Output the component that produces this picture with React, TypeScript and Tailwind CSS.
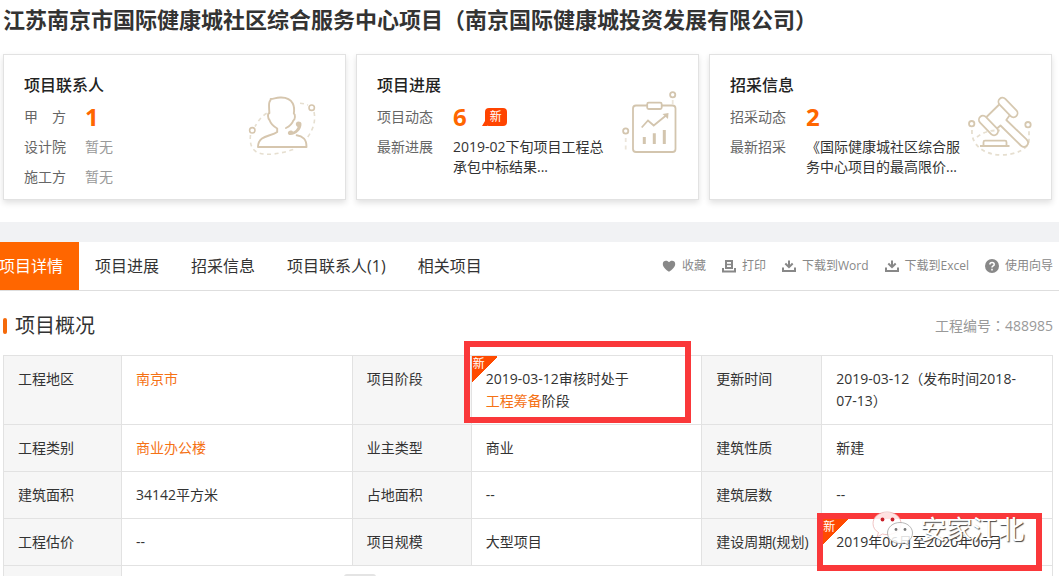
import React from 'react';

const tabs = ['项目详情', '项目进展', '招采信息', '项目联系人(1)', '相关项目'];

const ContactIcon = () => (
  <svg viewBox="0 0 72 66" className="w-[72px] h-[66px] shrink-0" fill="none" stroke="#d6c6ae" strokeWidth="1.6" aria-hidden="true">
    <path strokeWidth="1.9" strokeLinejoin="round" strokeLinecap="round" d="M39 35c4-2 6.500-5 7.300-7.500 2-1 2.200-6 .5-7 .8-5 0-8-1-10C43 5 37 4.300 33 4.500c-4 .2-6 1.200-9.300 1.500.3 1.500-1.200 1.500-1.500 4-.4 3 0 7 .2 10-2 .500-1.700 5 .1 7 1.200 3.500 4 6.500 7.700 8.500v3.500C26 42 19 42.500 15 45.500c-3 2.300-4 5-4 8.500h48.500c0-3-.3-6-2.500-8.300-2-2-4.500-3-7.300-3.400" />
    <path fill="#d6c6ae" stroke="none" d="M49.500 29.200c1.600-1.500 4.800-.6 5 1.500.2 6-5.500 11.500-11.500 11.300-2.400-.2-2.600-2.600-1.300-3.800 1.300-.9 3.400-.9 4.300.5 2.200-1 3.700-2.500 4.700-4.800-1.900-.8-2.500-3.200-1.200-4.700z" />
    <circle cx="5.300" cy="37.300" r="2.700" />
    <circle cx="64.700" cy="14.700" r="2.700" />
    <path stroke="#e6dfd0" strokeDasharray="4 3.500" d="M19.700 20.300C15 23 11 28 8 33.500M3.500 42c-1 8 1 14 6 17 10 5 27 1 40-3.500M53 10.300c3 0 5 .5 8 1.700M67 19c2 9-1 19-8 27" />
  </svg>
);

const ProgressIcon = () => (
  <svg viewBox="0 0 62 68" className="w-[62px] h-[68px] shrink-0" fill="none" stroke="#d3c5ae" strokeWidth="1.800" aria-hidden="true">
    <path d="M27 16.500H16a3 3 0 0 0-3 3v40.500a3 3 0 0 0 3 3h36.500a3 3 0 0 0 3-3V19.500a3 3 0 0 0-3-3H42" />
    <rect x="27.200" y="13.700" width="14.500" height="6.300" rx="1.500" />
    <path d="m21.700 38.500 6.300-7 5.700 5L46 26.500" />
    <path fill="#d3c5ae" stroke="none" d="m42.500 25 6-1-.5 6z" />
    <path strokeWidth="3" d="M24.300 55v-7M34.300 55V44.300M44.300 55V41" />
    <circle cx="5.700" cy="42" r="2.600" />
    <circle cx="52.700" cy="5.700" r="2.600" />
    <path stroke="#ebe5da" strokeDasharray="4 3.500" d="M5.700 49v12M52.700 11v4" />
  </svg>
);

const GavelIcon = () => (
  <svg viewBox="0 0 70 66" className="w-[70px] h-[66px] shrink-0" fill="none" stroke="#d6c8b0" strokeWidth="1.800" aria-hidden="true">
    <path stroke="#e6dfd0" strokeDasharray="4 3.500" d="M7 37c-1 13 9 24 28 25 16 0 29-6 29-15V37M12 44c6-5 14-7 23-6.500" />
    <rect x="-12" y="-4" width="24" height="8" rx="4" transform="translate(43 14.500) rotate(46)" />
    <rect x="-12" y="-4" width="24" height="8" rx="4" transform="translate(23.500 32.500) rotate(46)" />
    <path d="M34.200 11.500 21.500 24M44.500 22.500 41.300 27l20.200 19.300c4.200 4.500-1.300 10-5.700 6.200L35.500 32.500l-3.500 3" strokeLinejoin="round" />
    <path d="M18.500 52.500v-3.300a1.500 1.500 0 0 1 1.500-1.500h20a1.500 1.500 0 0 1 1.500 1.500v3.300M15 53h29.500" />
    <circle cx="6.700" cy="30.700" r="2.700" />
    <circle cx="63" cy="31.700" r="2.700" />
  </svg>
);

const HeartIcon = () => (
  <svg viewBox="0 0 14 14" className="w-3.5 h-3.5" fill="#888" aria-hidden="true">
    <path d="M7 12.800C4 10.500.8 8 .8 4.900.8 2.900 2.200 1.700 3.900 1.700 5.300 1.700 6.400 2.400 7 3.300c.6-.9 1.700-1.600 3.100-1.600 1.700 0 3.100 1.200 3.100 3.200C13.200 8 10 10.500 7 12.800z" />
  </svg>
);

const PrintIcon = () => (
  <svg viewBox="0 0 14 14" className="w-3.5 h-3.5" fill="none" stroke="#888" strokeWidth="2" aria-hidden="true">
    <path d="M4 2h6v7H4zM1 9v3.500h12V9" />
    <path strokeWidth="1.500" d="M5 5.500h4" />
  </svg>
);

const DownloadIcon = () => (
  <svg viewBox="0 0 14 14" className="w-3.5 h-3.5" fill="none" stroke="#888" strokeWidth="2" aria-hidden="true">
    <path d="M1 8.500V12h12V8.500M7 1.500v6.500M3.300 4.500 7 8.200l3.700-3.700" />
  </svg>
);

const HelpIcon = () => (
  <svg viewBox="0 0 14 14" className="w-3.5 h-3.5" fill="none" aria-hidden="true">
    <circle cx="7" cy="7" r="7" fill="#888" />
    <path d="M4.900 5.500c0-2.700 4.300-2.600 4.300-.1C9.200 7 7 6.900 7 8.600M7 9.800v1.600" stroke="#fff" strokeWidth="1.500" />
  </svg>
);

const WechatIcon = () => (
  <svg viewBox="0 0 44 36" className="w-11 h-9" fill="#fff" fillOpacity=".85" stroke="#999" strokeWidth=".7" aria-hidden="true">
    <path stroke="#e9a9a9" d="M15 1C7 1 1 6 1 12.500c0 4 2.200 7 5.500 9L5 26l5.500-3c1.500.5 3 .6 5 .6C23 23.500 29 19 29 12.500S23 1 15 1z" />
    <path d="M28 11.500c-7 0-12.500 4.700-12.500 10.500S21 32.500 28 32.500c1.600 0 3-.2 4.300-.6l4.700 2.600-1.200-4c3-2 4.700-5 4.700-8.500 0-5.800-5.500-10.500-12.500-10.500z" />
    <g stroke="none" fillOpacity="1">
      <circle cx="10.500" cy="8.500" r="1.900" fill="#c81e28" />
      <circle cx="20.500" cy="8.500" r="1.900" fill="#c81e28" />
      <circle cx="24" cy="18.500" r="1.400" fill="#777" />
      <circle cx="33" cy="18.500" r="1.400" fill="#777" />
    </g>
  </svg>
);

const actions = [
  { label: '收藏', icon: <HeartIcon /> },
  { label: '打印', icon: <PrintIcon /> },
  { label: '下载到Word', icon: <DownloadIcon /> },
  { label: '下载到Excel', icon: <DownloadIcon /> },
  { label: '使用向导', icon: <HelpIcon /> },
];

const Card = ({ title, icon, children }: { title: string; icon: React.ReactNode; children: React.ReactNode }) => (
  <section className="flex-1 min-w-0 min-h-[146px] flex justify-between border border-[#e2e2e2] bg-white pl-5 pt-3.5 pr-4 shadow-[0_3px_6px_rgba(0,0,0,0.12)]">
    <div>
      <h2 className="text-base leading-8 font-medium text-[#222]">{title}</h2>
      {children}
    </div>
    {icon}
  </section>
);

const Count = ({ children }: { children: React.ReactNode }) => (
  <span className="block text-2xl leading-[30px] font-bold text-[#ff6600]">{children}</span>
);

const NewCorner = () => (
  <span className="absolute left-0 top-0 w-[26px] h-[26px] pl-px text-xs leading-4 text-white bg-[linear-gradient(135deg,#ff4a00_50%,transparent_50%)]">新</span>
);

const Th = ({ children }: { children?: React.ReactNode }) => (
  <th scope="row" className="border border-[#e2e2e2] bg-[#f6f6f6] pl-3.5 py-3 align-top text-left font-normal whitespace-nowrap">{children}</th>
);

const Td = ({ children }: { children?: React.ReactNode }) => (
  <td className="relative border border-[#e2e2e2] px-3.5 py-3 align-top">{children}</td>
);

export default function App() {
  return (
    <div className="bg-white text-sm text-[#333] font-['Open_Sans','Noto_Sans_CJK_SC',sans-serif] overflow-hidden" lang="zh-CN">
      <header className="pl-[3px] pr-[7px] pb-[22px]">
        <h1 className="text-[22px] leading-[38px] pb-4 font-bold whitespace-nowrap">
          江苏南京市国际健康城社区综合服务中心项目（南京国际健康城投资发展有限公司）
        </h1>
        <div className="flex gap-2.5">
          <Card title="项目联系人" icon={<div className="pt-6 pr-2.5"><ContactIcon /></div>}>
            <dl className="grid grid-cols-[61px_auto] pt-px leading-[30px] text-[#666]">
              <dt>甲　方</dt>
              <dd><Count>1</Count></dd>
              <dt>设计院</dt>
              <dd className="text-[#999]">暂无</dd>
              <dt>施工方</dt>
              <dd className="text-[#999]">暂无</dd>
            </dl>
          </Card>
          <Card title="项目进展" icon={<div className="pt-5"><ProgressIcon /></div>}>
            <dl className="grid grid-cols-[76px_156px] pt-px leading-[30px] text-[#666]">
              <dt>项目动态</dt>
              <dd className="flex items-center gap-[18px]">
                <Count>6</Count>
                <span className="relative w-[22px] h-[18px] rounded-sm bg-[#ff4400] text-center text-xs leading-[18px] text-white">
                  新
                  <svg viewBox="0 0 5 5" className="absolute -left-[3px] bottom-0 w-[5px] h-[5px]" fill="#ff4400" aria-hidden="true">
                    <path d="M3 0v5H0z M3 0h2v5H0z" />
                  </svg>
                </span>
              </dd>
              <dt>最新进展</dt>
              <dd className="pt-[5px] leading-5 text-[#333]">2019-02下旬项目工程总承包中标结果...</dd>
            </dl>
          </Card>
          <Card title="招采信息" icon={<div className="pt-6"><GavelIcon /></div>}>
            <dl className="grid grid-cols-[76px_156px] pt-px leading-[30px] text-[#666]">
              <dt>招采动态</dt>
              <dd><Count>2</Count></dd>
              <dt>最新招采</dt>
              <dd className="pt-[5px] leading-5 text-[#333]">《国际健康城社区综合服务中心项目的最高限价...</dd>
            </dl>
          </Card>
        </div>
      </header>

      <div className="h-5 bg-[#f1f2f4]" />

      <div className="flex justify-between border-b border-[#dedede] pr-[6px]">
        <nav className="flex -ml-[17px]">
          {tabs.map((tab, i) => (
            <a
              key={tab}
              href="#"
              className={i === 0 ? 'px-4 text-base leading-[48px] bg-[#ff6600] text-white' : 'px-4 text-base leading-[48px]'}
            >
              {tab}
            </a>
          ))}
        </nav>
        <div className="flex items-center gap-4 text-xs text-[#888]">
          {actions.map((action) => (
            <button key={action.label} type="button" className="flex items-center gap-1.5">
              {action.icon}
              {action.label}
            </button>
          ))}
        </div>
      </div>

      <main className="pl-[3px] pr-[6px]">
        <div className="flex items-center justify-between h-16 pt-1.5">
          <h2 className="flex items-center gap-2 text-xl">
            <span className="w-1 h-4 rounded-sm bg-[#f56a0a]" />
            项目概况
          </h2>
          <span lang="zh-TW" className="font-['Open_Sans','Noto_Sans_CJK_SC',sans-serif] text-[#999]">
            工程编号<span className="font-['Noto_Sans_CJK_TC',sans-serif] leading-none">：</span>488985
          </span>
        </div>

        <table className="w-full table-fixed border-collapse leading-[22px]">
          <colgroup>
            <col className="w-[118px]" />
            <col />
            <col className="w-[119px]" />
            <col />
            <col className="w-[120px]" />
            <col />
          </colgroup>
          <tbody>
            <tr>
              <Th>工程地区</Th>
              <Td><a href="#" className="text-[#f57215]">南京市</a></Td>
              <Th>项目阶段</Th>
              <Td>
                <NewCorner />
                2019-03-12审核时处于<br />
                <a href="#" className="text-[#f57215]">工程筹备</a>阶段
                <span className="absolute z-10 -left-2 -top-[15px] w-[227px] h-[82px] border-[6px] border-[#fa383a]" />
              </Td>
              <Th>更新时间</Th>
              <Td>2019-03-12（发布时间2018-<br />07-13）</Td>
            </tr>
            <tr>
              <Th>工程类别</Th>
              <Td><a href="#" className="text-[#f57215]">商业办公楼</a></Td>
              <Th>业主类型</Th>
              <Td>商业</Td>
              <Th>建筑性质</Th>
              <Td>新建</Td>
            </tr>
            <tr>
              <Th>建筑面积</Th>
              <Td>34142平方米</Td>
              <Th>占地面积</Th>
              <Td>--</Td>
              <Th>建筑层数</Th>
              <Td>--</Td>
            </tr>
            <tr>
              <Th>工程估价</Th>
              <Td>--</Td>
              <Th>项目规模</Th>
              <Td>大型项目</Td>
              <Th>建设周期(规划)</Th>
              <Td>
                <NewCorner />
                2019年06月至2020年06月
                <span className="absolute z-10 -left-[5px] -top-1.5 w-[225px] h-[58px] border-[6px] border-[#fa383a]" />
                <span className="absolute z-20 left-[50px] -top-2 flex items-center gap-1 text-[26px] leading-9 text-white whitespace-nowrap [text-shadow:1px_1px_1px_#444]">
                  <WechatIcon />
                  安家江北
                </span>
              </Td>
            </tr>
            <tr className="h-[11px]">
              <th className="border-x border-[#e2e2e2] bg-[#f6f6f6]" />
              <td colSpan={5} className="relative border-x border-[#e2e2e2]">
                <span className="absolute left-[222px] bottom-0 w-8 h-[3px] rounded-t-full bg-[#e4e4e4]" />
              </td>
            </tr>
          </tbody>
        </table>
      </main>
    </div>
  );
}
